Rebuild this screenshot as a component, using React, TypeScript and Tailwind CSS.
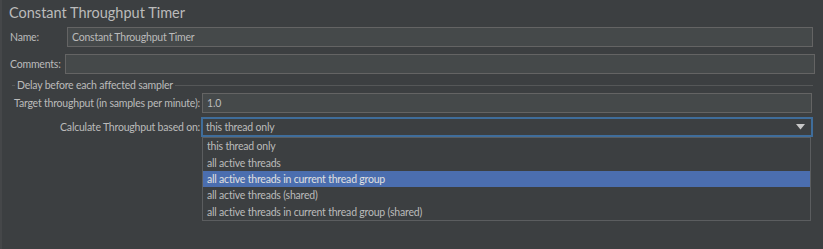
import { useState } from "react";

const options = [
  "this thread only",
  "all active threads",
  "all active threads in current thread group",
  "all active threads (shared)",
  "all active threads in current thread group (shared)",
];

function Field({ value = "", className = "" }: { value?: string; className?: string }) {
  return (
    <div
      className={`flex h-[20px] items-center border border-[#646464] bg-[#45494a] px-[4px] text-[#bbbbbb] ${className}`}
    >
      {value}
    </div>
  );
}

export default function App() {
  const [selected] = useState(0);
  const hovered = 2;

  return (
    <div
      className="relative h-[249px] w-[823px] overflow-hidden whitespace-nowrap border-l-2 border-[#454749] bg-[#3c3f41] text-[10.5px] leading-[16px] tracking-[-0.2px] text-[#bbbbbb]"
      style={{ fontFamily: "Lato, 'Liberation Sans', sans-serif" }}
    >
      {/* Title */}
      <div className="flex h-[25px] items-center pl-[7px] text-[14.5px] tracking-normal">Constant Throughput Timer</div>

      {/* Name / Comments */}
      <div className="mt-[2px] flex h-[20px] items-center pl-[8px] pr-[10px]">
        <span className="w-[57px]">Name:</span>
        <Field value="Constant Throughput Timer" className="flex-1" />
      </div>
      <div className="mt-[7px] flex h-[20px] items-center pl-[8px] pr-[8px]">
        <span className="w-[55px]">Comments:</span>
        <Field className="flex-1" />
      </div>

      {/* Group */}
      <div className="mt-[3px] flex h-[16px] items-center pl-[10px] pr-[10px]">
        <div className="h-px w-[3px] bg-[#555758]" />
        <span className="px-[2px]">Delay before each affected sampler</span>
        <div className="h-px flex-1 bg-[#555758]" />
      </div>

      <div className="grid grid-cols-[186px_1fr] items-center gap-x-[2px] gap-y-[4px] pl-[12px] pr-[11px]">
        <span className="text-right">Target throughput (in samples per minute):</span>
        <Field value="1.0" className="h-[19px]" />
        <span className="text-right">Calculate Throughput based on:</span>
        <div className="relative -mx-px">
          <div className="flex h-[20px] items-center justify-between border-2 border-[#3f6d9b] bg-[#3c3f41] px-[3px]">
            <span>{options[selected]}</span>
            <svg width="9" height="6" viewBox="0 0 9 6" className="mr-[3px]">
              <path d="M0 0 H9 L4.5 5.5 Z" fill="#c8c8c8" />
            </svg>
          </div>
          {/* Popup list */}
          <div className="absolute left-px right-[2px] top-[20px] z-10 border border-[#5b5d5f] bg-[#3c3f41]">
            {options.map((opt, i) => (
              <div
                key={opt}
                className={`flex h-[16.4px] items-center px-[4px] ${i === hovered ? "bg-[#4b6eaf] text-[#e0e0e0]" : ""}`}
              >
                {opt}
              </div>
            ))}
          </div>
        </div>
      </div>
    </div>
  );
}
